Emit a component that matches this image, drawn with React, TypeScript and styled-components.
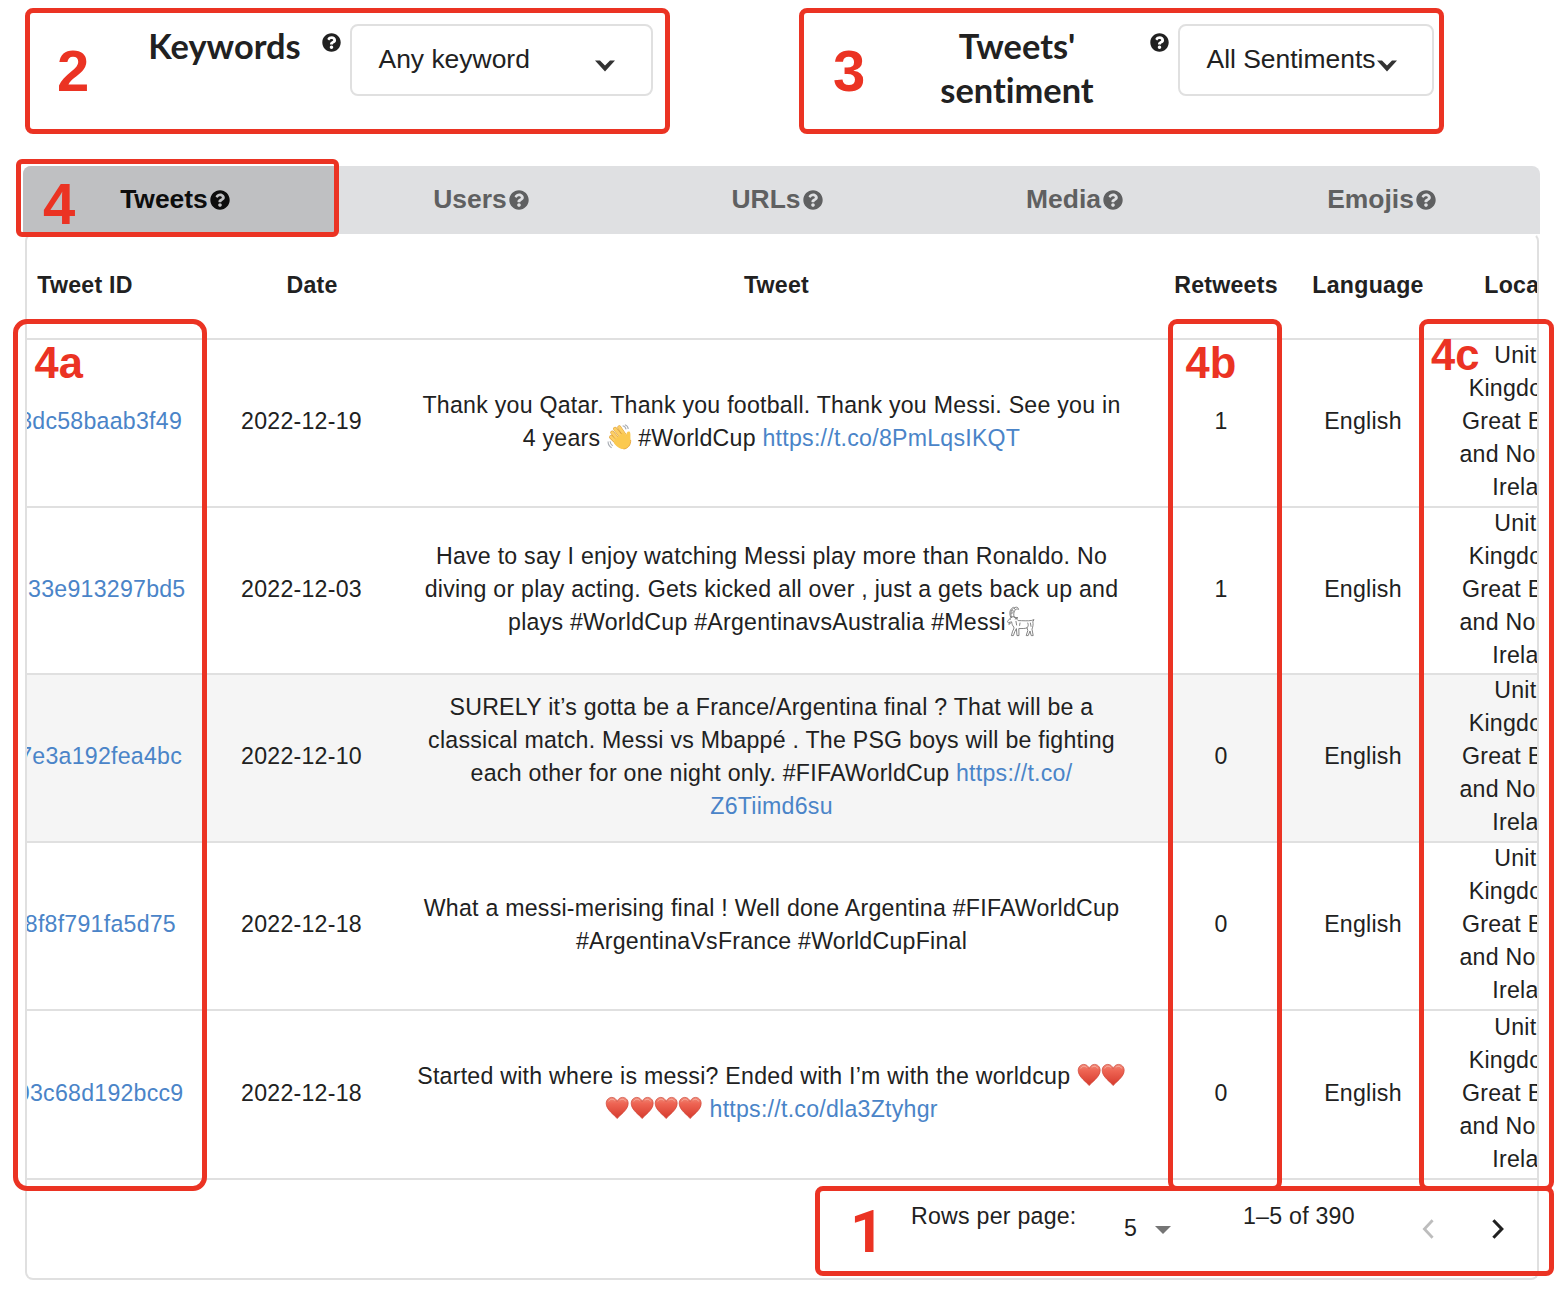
import React from "react";
import styled, { createGlobalStyle } from "styled-components";
import { FaQuestionCircle } from "react-icons/fa";

const GlobalStyle = createGlobalStyle`
  *, *::before, *::after { box-sizing: border-box; }
  body {
    margin: 0;
    background: #fff;
    color: #212121;
    font-family: "Liberation Sans", Helvetica, Arial, sans-serif;
  }
`;

const line = "#e0e0e0";
const accent = "#eb3323";

const Page = styled.main`
  position: relative;
  width: 1562px;
  height: 1290px;
  overflow: hidden;
`;

const Filters = styled.header`
  display: flex;
  align-items: flex-start;
  height: 166px;
  padding-top: 24px;
`;

const Filter = styled.section<{ $offset: number }>`
  display: flex;
  align-items: flex-start;
  margin-left: ${(p) => p.$offset}px;
`;

const FilterTitle = styled.h2<{ $width: number }>`
  width: ${(p) => p.$width}px;
  margin: 0;
  font: 700 34.4px/44px Lato, sans-serif;
  font-variant-ligatures: none;
  text-align: center;
`;

const FilterHelp = styled(FaQuestionCircle)<{ $gap: number }>`
  width: 19px;
  height: 19px;
  margin: 8.5px 9px 0 ${(p) => p.$gap}px;
`;

const Select = styled.button<{ $width: number; $arrowInset: number }>`
  display: flex;
  justify-content: space-between;
  width: ${(p) => p.$width}px;
  height: 72px;
  padding: 18px ${(p) => p.$arrowInset}px 0 26.5px;
  border: 2px solid ${line};
  border-radius: 8px;
  background: #fff;
  color: inherit;
  font: 26.45px/30px "Liberation Sans", Helvetica, sans-serif;
  white-space: nowrap;
  text-align: left;
`;

const SelectArrow = styled.svg`
  flex: none;
  width: 20px;
  height: 12px;
  margin-top: 15.5px;
`;

const Tabs = styled.nav`
  display: grid;
  grid-template-columns: 311px 294px 298px 297px 317px;
  width: 1517px;
  height: 68px;
  margin-left: 23px;
  border-radius: 8px 8px 0 0;
  background: #dfe0e2;
  overflow: hidden;
`;

const Tab = styled.button<{ $active?: boolean }>`
  display: flex;
  align-items: center;
  justify-content: center;
  gap: 2px;
  border: 0;
  padding: ${(p) => (p.$active ? "0 7px 2px 0" : "0 0 2px 0")};
  background: ${(p) => (p.$active ? "#bfc0c2" : "transparent")};
  color: ${(p) => (p.$active ? "#0d0d0d" : "#5f6061")};
  font: 700 26.45px/30px "Liberation Sans", Helvetica, sans-serif;

  svg {
    width: 20px;
    height: 20px;
    margin-top: 1px;
  }
`;

const Card = styled.section`
  width: 1514px;
  height: 1047px;
  margin: -1px 0 0 25px;
  border: 2px solid ${line};
  border-top-color: transparent;
  border-radius: 8px;
  overflow: hidden;
`;

const columns = "178px 193px 747px 152px 132px 199px";

const HeadRow = styled.div`
  display: grid;
  grid-template-columns: ${columns};
  width: 1601px;
  height: 105px;
  border-bottom: 2px solid ${line};
`;

const HeadCell = styled.div<{ $before?: number; $after?: number }>`
  padding: 34px ${(p) => p.$after ?? 0}px 0 ${(p) => p.$before ?? 0}px;
  font-size: 23.15px;
  font-weight: 700;
  line-height: 33px;
  letter-spacing: 0.248px;
  text-align: center;
  white-space: nowrap;
`;

const BodyRow = styled.div<{ $height: number; $hover?: boolean }>`
  display: grid;
  grid-template-columns: ${columns};
  grid-template-rows: 100%;
  width: 1601px;
  height: ${(p) => p.$height}px;
  border-bottom: 2px solid ${line};
  background: ${(p) => (p.$hover ? "#f5f5f5" : "#fff")};
  font-size: 23.15px;
  line-height: 33.1px;
  letter-spacing: 0.248px;
`;

const Cell = styled.div`
  display: flex;
  flex-direction: column;
  justify-content: center;
  align-items: center;
  min-height: 0;
  padding-bottom: 2.5px;
  white-space: pre;
`;

const IdCell = styled(Cell)<{ $inset: number }>`
  align-items: flex-end;
  padding-right: ${(p) => p.$inset}px;
  overflow: hidden;
`;

const TextLine = styled.div`
  flex: none;
  height: 33.1px;
`;

const Link = styled.a`
  color: #4a84c8;
  text-decoration: none;
`;

const Glyph = styled.svg<{ $width: number; $height?: number; $drop?: number }>`
  width: ${(p) => p.$width}px;
  height: ${(p) => p.$height ?? 24}px;
  margin: -6px 0;
  vertical-align: ${(p) => p.$drop ?? 3.5}px;
`;

const Pagination = styled.footer`
  display: flex;
  align-items: flex-start;
  height: 98px;
  padding: 20px 0 0 884px;
  font-size: 23.15px;
  line-height: 33px;
  letter-spacing: 0.248px;

  > * {
    flex: none;
  }
`;

const PageLabel = styled.span`
  width: 213px;
`;

const PageSize = styled.span`
  display: flex;
  gap: 18px;
  width: 119px;
  margin-top: 12px;

  svg {
    width: 16px;
    height: 8px;
    margin-top: 14px;
  }
`;

const PageRange = styled.span`
  width: 179px;
`;

const PageArrow = styled.svg`
  width: 12px;
  height: 20px;
  margin: 19px 58px 0 0;
`;

const Mark = styled.div<{
  $x: number; $y: number; $w: number; $h: number; $r?: number;
}>`
  position: absolute;
  left: ${(p) => p.$x}px;
  top: ${(p) => p.$y}px;
  width: ${(p) => p.$w}px;
  height: ${(p) => p.$h}px;
  border: 5px solid ${accent};
  border-radius: ${(p) => p.$r ?? 8}px;
  pointer-events: none;
`;

const MarkLabel = styled.span<{ $x: number; $y: number; $size: number; $font?: string }>`
  position: absolute;
  left: ${(p) => p.$x}px;
  top: ${(p) => p.$y}px;
  color: ${accent};
  font-family: ${(p) => p.$font ?? '"Liberation Sans"'}, sans-serif;
  font-size: ${(p) => p.$size}px;
  font-weight: 700;
  line-height: 1;
`;

const Chevron = () => (
  <SelectArrow viewBox="0 0 20 12">
    <path d="M0 0.6H5L10 5.5L15 0.6H20L10 11.4Z" fill="#333" />
  </SelectArrow>
);

const Heart = () => (
  <Glyph $width={24.4} viewBox="0 0 24 24">
    <defs>
      <linearGradient id="heartFill" x1="0" y1="0" x2="0" y2="1">
        <stop offset="0" stopColor="#f08a78" />
        <stop offset="0.3" stopColor="#ee6453" />
        <stop offset="1" stopColor="#d63a2d" />
      </linearGradient>
    </defs>
    <path
      d="M12 22.6C9.6 19.2 1 14 1 7.4C1 3.8 3.6 1.4 6.6 1.4C9.2 1.4 11.2 3 12 5.6C12.8 3 14.8 1.4 17.4 1.4C20.4 1.4 23 3.8 23 7.4C23 14 14.4 19.2 12 22.6Z"
      fill="url(#heartFill)"
      stroke="#cf4638"
      strokeWidth="0.7"
    />
    <path d="M3.6 5.4C4.6 3 7.8 2.6 9.4 4.4M14.6 4.4C16.2 2.6 19.4 3 20.4 5.4" fill="none" stroke="#f7b0a3" strokeWidth="1" />
  </Glyph>
);

const WavingHand = () => (
  <Glyph $width={24.5} $height={26} $drop={1.5} viewBox="0 0 24 26">
    <g fill="none" strokeLinecap="round">
      <path d="M5 8.6L12 17M7.8 4.8L15 14M12 3.4L18 12M3.8 13L11 20" stroke="#dc9d38" strokeWidth="3.9" />
      <path d="M5 8.6L12 17M7.8 4.8L15 14M12 3.4L18 12M3.8 13L11 20" stroke="#fccf66" strokeWidth="3" />
    </g>
    <path d="M7.4 16L16 8.2L19 12.2C18.8 9 20.4 6.8 22.2 7.6C23.8 9 22.8 12.6 23.4 16C23.8 20.8 20.6 24.8 16.2 25C12.4 25.2 9.4 22.4 6.8 19.2Z" fill="#fbc950" />
    <path d="M16.2 25C20.6 24.8 23.8 20.8 23.4 16" fill="none" stroke="#e6a53c" strokeWidth="0.9" />
    <path d="M17.6 0.8C19.6 1.4 20.8 3 21 5M15.4 1.8C17.2 2.2 18.4 3.4 18.8 5.4M0.8 17.6C0.8 20.2 2 22.4 4.4 23.8M2.8 17.2C3 19 3.8 20.6 5.4 21.8" fill="none" stroke="#a8acb3" strokeWidth="1.1" />
  </Glyph>
);

const Goat = () => (
  <Glyph $width={29} $height={31} $drop={-1} viewBox="0 0 29 31">
    <g fill="none" stroke="#777" strokeWidth="0.9" strokeLinejoin="round" strokeLinecap="round">
      <path d="M5.6 11.6C3.4 6 6 1.4 10.4 1.2C11.6 1.2 12.4 2 12.6 3.4C9.6 1.8 6.8 5.6 8 10.8M4.6 11C2.8 6.4 4.2 2.6 7.2 1.4M5.2 7.2L7 6.8M6 4.6L7.8 5.2M8.2 2.2L9.2 3.6" />
      <path d="M5.2 11.2L1.6 15.2C1.2 16.4 2.2 17 3.4 16.4L5.6 15.8C6 18 6.4 19.6 7.8 21C8.2 22.2 7.6 23.4 6.6 25.2L5.4 29.6H7.4L8.8 25.6L10.4 22.6L11 29.6H13L12.8 22.6C15.8 22.4 18.8 22.8 21 21.8L21.8 24.6L20.2 29.6H22.2L24 25L25.2 29.6H27.2L26 23.2C27 20.4 27.4 18 26.8 15.8L28 13.6L25.8 14.4C22 15.2 16.4 14.6 12.2 14.6C10.6 13.2 9.6 11.4 8 10.8Z" />
      <path d="M8.2 11.2L12 11.8L9.2 13M4.4 13.2H4.6M3.4 16.6L3 18.6L4.6 17M10 15.4L10.6 19M21.8 17C22.6 19 22.4 20.4 21 21.8M24.4 17L25 20.4M14 17L13.6 19.4" />
    </g>
  </Glyph>
);

type Tweet = {
  id: string;
  inset: number;
  date: string;
  lines: React.ReactNode[];
  retweets: number;
  height: number;
  hover?: boolean;
};

const tweets: Tweet[] = [
  {
    id: "8dc58baab3f49",
    inset: 23,
    date: "2022-12-19",
    lines: [
      "Thank you Qatar. Thank you football. Thank you Messi. See you in",
      <>4 years <WavingHand /> #WorldCup <Link>https://t.co/8PmLqsIKQT</Link></>,
    ],
    retweets: 1,
    height: 168,
  },
  {
    id: "33e913297bd5",
    inset: 19.5,
    date: "2022-12-03",
    lines: [
      "Have to say I enjoy watching Messi play more than Ronaldo. No",
      "diving or play acting. Gets kicked all over , just a gets back up and",
      <>plays #WorldCup #ArgentinavsAustralia #Messi<Goat /></>,
    ],
    retweets: 1,
    height: 167,
  },
  {
    id: "7e3a192fea4bc",
    inset: 23,
    date: "2022-12-10",
    lines: [
      "SURELY it’s gotta be a France/Argentina final ? That will be a",
      "classical match. Messi vs Mbappé . The PSG boys will be fighting",
      <>each other for one night only. #FIFAWorldCup <Link>https://t.co/</Link></>,
      <Link>Z6Tiimd6su</Link>,
    ],
    retweets: 0,
    height: 168,
    hover: true,
  },
  {
    id: "8f8f791fa5d75",
    inset: 29,
    date: "2022-12-18",
    lines: [
      "What a messi-merising final ! Well done Argentina #FIFAWorldCup",
      "#ArgentinaVsFrance #WorldCupFinal",
    ],
    retweets: 0,
    height: 168,
  },
  {
    id: "03c68d192bcc9",
    inset: 21.5,
    date: "2022-12-18",
    lines: [
      <>Started with where is messi? Ended with I’m with the worldcup <Heart /><Heart /></>,
      <><Heart /><Heart /><Heart /><Heart /> <Link>https://t.co/dla3Ztyhgr</Link></>,
    ],
    retweets: 0,
    height: 169,
  },
];

const location = ["United", "Kingdom of", "Great Britain", "and Northern", "Ireland"];

const headings: { name: string; before?: number; after?: number }[] = [
  { name: "Tweet ID", after: 62 },
  { name: "Date", before: 21 },
  { name: "Tweet", before: 10 },
  { name: "Retweets", before: 10 },
  { name: "Language", before: 10 },
  { name: "Location", before: 10 },
];

export default function App() {
  return (
    <Page>
      <GlobalStyle />
      <Filters>
        <Filter $offset={139}>
          <FilterTitle $width={171}>Keywords</FilterTitle>
          <FilterHelp $gap={12} />
          <Select $width={303} $arrowInset={36}>
            Any keyword
            <Chevron />
          </Select>
        </Filter>
        <Filter $offset={262}>
          <FilterTitle $width={204}>Tweets' sentiment</FilterTitle>
          <FilterHelp $gap={31} />
          <Select $width={256} $arrowInset={35}>
            All Sentiments
            <Chevron />
          </Select>
        </Filter>
      </Filters>

      <Tabs>
        {["Tweets", "Users", "URLs", "Media", "Emojis"].map((name, i) => (
          <Tab key={name} $active={i === 0}>
            {name}
            <FaQuestionCircle />
          </Tab>
        ))}
      </Tabs>

      <Card>
        <HeadRow>
          {headings.map(({ name, before, after }) => (
            <HeadCell key={name} $before={before} $after={after}>{name}</HeadCell>
          ))}
        </HeadRow>
        {tweets.map((t) => (
          <BodyRow key={t.id} $height={t.height} $hover={t.hover}>
            <IdCell $inset={t.inset}><Link>{t.id}</Link></IdCell>
            <Cell>{t.date}</Cell>
            <Cell>
              {t.lines.map((content, i) => (
                <TextLine key={i}>{content}</TextLine>
              ))}
            </Cell>
            <Cell>{t.retweets}</Cell>
            <Cell>English</Cell>
            <Cell>
              {location.map((part) => (
                <TextLine key={part}>{part}</TextLine>
              ))}
            </Cell>
          </BodyRow>
        ))}
        <Pagination>
          <PageLabel>Rows per page:</PageLabel>
          <PageSize>
            5
            <svg viewBox="0 0 16 8"><path d="M0 0H16L8 8Z" fill="#757575" /></svg>
          </PageSize>
          <PageRange>1–5 of 390</PageRange>
          <PageArrow viewBox="0 0 12 20">
            <path d="M10.6 1.2L2.4 10L10.6 18.8" fill="none" stroke="#bdbdbd" strokeWidth="2.8" />
          </PageArrow>
          <PageArrow viewBox="0 0 12 20">
            <path d="M1.4 1.2L9.8 10L1.4 18.8" fill="none" stroke="#212121" strokeWidth="3.1" />
          </PageArrow>
        </Pagination>
      </Card>

      <Mark $x={25} $y={8} $w={645} $h={126} />
      <Mark $x={798.5} $y={8} $w={645} $h={126} />
      <Mark $x={15.5} $y={159} $w={323} $h={78} $r={6} />
      <Mark $x={12.5} $y={318.5} $w={194} $h={872} $r={14} />
      <Mark $x={1167.5} $y={318.5} $w={114} $h={872} $r={9} />
      <Mark $x={1418.5} $y={318.5} $w={135} $h={872} $r={9} />
      <Mark $x={814.5} $y={1186} $w={739} $h={90} />
      <MarkLabel $x={57} $y={42} $size={58}>2</MarkLabel>
      <MarkLabel $x={833} $y={42} $size={58}>3</MarkLabel>
      <MarkLabel $x={43} $y={175} $size={58}>4</MarkLabel>
      <MarkLabel $x={34.5} $y={342} $size={43.5}>4a</MarkLabel>
      <MarkLabel $x={1185.5} $y={342} $size={43.5}>4b</MarkLabel>
      <MarkLabel $x={1431} $y={333.5} $size={43.5}>4c</MarkLabel>
      <MarkLabel $x={850} $y={1202} $size={60} $font="Roboto">1</MarkLabel>
    </Page>
  );
}
